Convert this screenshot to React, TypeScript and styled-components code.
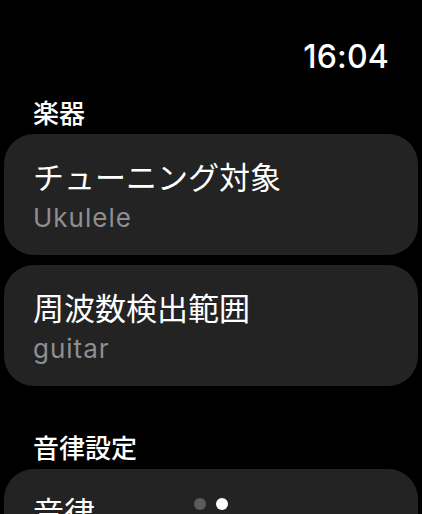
import { createGlobalStyle, styled } from 'styled-components';

const GlobalStyle = createGlobalStyle`
    html, body {
        margin: 0;
        padding: 0;
        background: #000;
    }

    body {
        font-family: Inter, "Noto Sans CJK JP", sans-serif;
        color: #fff;
        -webkit-font-smoothing: antialiased;
    }
`;

const Screen = styled.div`
    width: 422px;
    height: 514px;
    box-sizing: border-box;
    padding: 0 4px;
    overflow: hidden;
    position: relative;
    background: #000;
`;

const StatusBar = styled.div`
    display: flex;
    justify-content: flex-end;
    padding: 36px 29px 0 0;
    height: 42px;

    font-family: Inter, sans-serif;
    font-size: 32px;
    font-weight: 500;
    line-height: 42px;
    letter-spacing: 0.2px;
`;

const SectionTitle = styled.div<{ $top: number }>`
    margin-top: ${(p) => p.$top}px;
    padding-left: 29px;
    height: 32px;

    font-family: "Noto Sans CJK JP", sans-serif;
    font-size: 26px;
    font-weight: 500;
    line-height: 32px;
`;

const CardList = styled.div`
    display: flex;
    flex-direction: column;
    gap: 10px;
    margin-top: 6px;
`;

const Card = styled.div`
    height: 121px;
    box-sizing: border-box;
    padding: 23px 29px 0;

    display: flex;
    flex-direction: column;
    gap: 7px;

    border-radius: 30px;
    background: #232323;
`;

const CardTitle = styled.div`
    font-family: "Noto Sans CJK JP", sans-serif;
    font-size: 31px;
    font-weight: 400;
    line-height: 38px;
    white-space: nowrap;
`;

const CardValue = styled.div`
    font-family: Inter, sans-serif;
    font-size: 26px;
    font-weight: 400;
    line-height: 32px;
    letter-spacing: 1px;
    color: #8e8e93;
`;

const PageDots = styled.div`
    position: absolute;
    left: 0;
    right: 0;
    bottom: 4px;

    display: flex;
    justify-content: center;
    gap: 10px;
`;

const Dot = styled.span<{ $active?: boolean }>`
    width: 12px;
    height: 12px;
    border-radius: 50%;
    background: ${(p) => (p.$active ? '#fff' : '#5a5a5a')};
`;

type Item = { title: string; value?: string };

const sections: { title: string; top: number; items: Item[] }[] = [
    {
        title: '楽器',
        top: 18,
        items: [
            { title: 'チューニング対象', value: 'Ukulele' },
            { title: '周波数検出範囲', value: 'guitar' },
        ],
    },
    {
        title: '音律設定',
        top: 45,
        // the value row of this card is below the fold
        items: [{ title: '音律' }],
    },
];

export default function App() {
    return (
        <>
            <GlobalStyle />
            <Screen>
                <StatusBar>16:04</StatusBar>
                {sections.map((section) => (
                    <div key={section.title}>
                        <SectionTitle $top={section.top}>{section.title}</SectionTitle>
                        <CardList>
                            {section.items.map((item) => (
                                <Card key={item.title}>
                                    <CardTitle>{item.title}</CardTitle>
                                    {item.value && <CardValue>{item.value}</CardValue>}
                                </Card>
                            ))}
                        </CardList>
                    </div>
                ))}
                <PageDots>
                    <Dot />
                    <Dot $active />
                </PageDots>
            </Screen>
        </>
    );
}
